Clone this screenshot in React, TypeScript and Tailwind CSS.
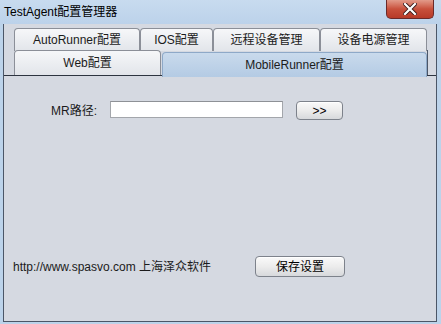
import React from "react";

const font = { fontFamily: '"Liberation Sans", "Noto Sans CJK SC", sans-serif' };

function Tab({ label, w, selected = false, top = 0 }: { label: string; w: string; selected?: boolean; top?: number }) {
  return (
    <div
      className={
        selected
          ? `${w} h-full flex items-center justify-center rounded-t-[4px] border border-b-0 border-[#8ea9c8] bg-gradient-to-b from-[#c9daec] to-[#b4cbe4] text-[12px] text-[#1b1b1b] mt-[2px]`
          : `${w} h-full flex items-center justify-center rounded-t-[4px] border border-b-0 border-[#8b8f98] bg-gradient-to-b from-[#f6f7f9] to-[#e2e5ea] text-[12px] text-[#1b1b1b]`
      }
      style={top ? { marginTop: top } : undefined}
    >
      {label}
    </div>
  );
}

function WinButton({ label, w }: { label: string; w: string }) {
  return (
    <div
      className={`${w} h-full flex items-center justify-center rounded-[4px] border border-[#7d828b] bg-gradient-to-b from-[#fafafa] via-[#ececec] to-[#d7d9dc] text-[12px] text-black shadow-[inset_0_1px_0_#fff]`}
    >
      {label}
    </div>
  );
}

export default function App() {
  return (
    <div className="w-[441px] h-[324px] bg-[#bcd3ea] flex flex-col overflow-hidden" style={font}>
      {/* title bar */}
      <div className="h-[24px] flex justify-between bg-gradient-to-b from-[#c8dbef] to-[#bcd2ea]">
        <div className="pl-[4px] pt-[3px] text-[12px] text-black">TestAgent配置管理器</div>
        <div className="w-[48px] h-[19px] mr-[7px] rounded-b-[5px] border border-t-0 border-[#6b2a2a] bg-gradient-to-b from-[#e29a8a] via-[#c8503c] to-[#b73a28] flex items-center justify-center">
          <svg width="14" height="12" viewBox="0 0 14 12">
            <path d="M2 1 L12 11 M12 1 L2 11" stroke="#3a1a1a" strokeWidth="4" strokeLinecap="square" />
            <path d="M2 1 L12 11 M12 1 L2 11" stroke="#ffffff" strokeWidth="2.2" strokeLinecap="square" />
          </svg>
        </div>
      </div>

      {/* client area */}
      <div className="ml-[3px] mr-[4px] mb-[2px] flex-1 flex flex-col bg-[#d5d9e1] border-l border-r border-b border-[#4b5667]">
        {/* tabs */}
        <div className="pt-[4px] border-b border-[#2d3440]">
          <div className="pl-[10px] h-[23px] flex">
            <Tab label="AutoRunner配置" w="w-[126px]" />
            <Tab label="IOS配置" w="w-[73px]" />
            <Tab label="远程设备管理" w="w-[107px]" />
            <Tab label="设备电源管理" w="w-[107px]" />
          </div>
          <div className="pl-[10px] h-[25px] flex -mt-[1px]">
            <Tab label="Web配置" w="w-[147px]" />
            <div className="w-[1px]" />
            <Tab label="MobileRunner配置" w="w-[265px]" selected />
            <div className="w-[1px] h-full bg-[#4b5667]" />
          </div>
        </div>

        {/* path row */}
        <div className="mt-[25px] h-[19px] flex items-start">
          <div className="w-[93px] pt-[1px] text-right text-[12px] text-[#1b1b1b]">MR路径:</div>
          <div className="ml-[13px] w-[173px] h-[17px] bg-white border border-[#a3a6ab] border-t-[#8e9196]" />
          <div className="ml-[13px]">
            <div className="h-[19px]">
              <WinButton label=">>" w="w-[47px]" />
            </div>
          </div>
        </div>

        <div className="flex-1" />

        {/* footer */}
        <div className="h-[21px] flex items-center mb-[44px]">
          <div className="pl-[9px] w-[251px] text-[12px] text-[#1b1b1b]">http://www.spasvo.com 上海泽众软件</div>
          <div className="h-full">
            <WinButton label="保存设置" w="w-[90px]" />
          </div>
        </div>
      </div>
    </div>
  );
}
